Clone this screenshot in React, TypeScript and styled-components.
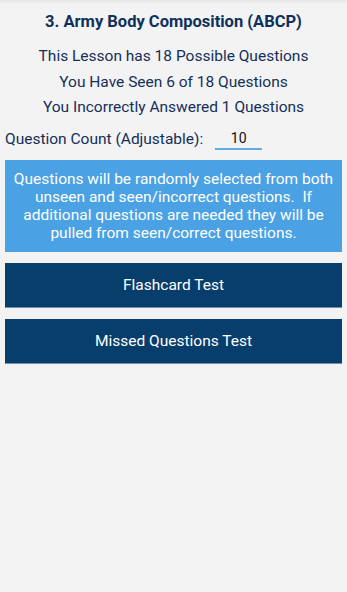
import React, { useState } from 'react';
import styled, { createGlobalStyle } from 'styled-components';

const GlobalStyle = createGlobalStyle`
  html, body {
    margin: 0;
    padding: 0;
    background: #f3f3f3;
  }
  body {
    font-family: Roboto, "Liberation Sans", sans-serif;
  }
`;

const Screen = styled.div`
  width: 347px;
  min-height: 592px;
  background: linear-gradient(#e6e6e6 0, #f3f3f3 4px);
  display: flex;
  flex-direction: column;
  padding: 0 5px;
  box-sizing: border-box;
`;

const Title = styled.h1`
  margin: 11px 0 0;
  font-size: 16.5px;
  font-weight: 700;
  line-height: 22px;
  color: #10305c;
  text-align: center;
`;

const Stats = styled.div`
  margin-top: 11px;
  display: flex;
  flex-direction: column;
`;

const StatLine = styled.p`
  margin: 0;
  font-size: 15.5px;
  line-height: 25.5px;
  color: #132f5a;
  text-align: center;
`;

const CountRow = styled.div`
  margin-top: 6px;
  display: flex;
  align-items: center;
  height: 24px;
`;

const CountLabel = styled.span`
  font-size: 15.5px;
  color: #132f5a;
`;

const CountInput = styled.input`
  margin-left: 12px;
  width: 47px;
  height: 20px;
  padding: 0;
  border: none;
  border-bottom: 2px solid #5aaee0;
  background: transparent;
  text-align: center;
  font-family: Roboto, "Liberation Sans", sans-serif;
  font-size: 14px;
  color: #111;
  outline: none;
`;

const Notice = styled.div`
  margin-top: 9px;
  height: 92px;
  background: #4aa1e3;
  color: #fff;
  font-size: 15.5px;
  line-height: 18px;
  text-align: center;
  display: flex;
  align-items: center;
  justify-content: center;
  padding: 0 3px;
  box-sizing: border-box;
`;

const ActionButton = styled.button`
  margin-top: 11px;
  height: 45px;
  width: 100%;
  border: none;
  border-bottom: 1px solid #6f8fae;
  background: #083e6c;
  color: #fff;
  font-family: Roboto, "Liberation Sans", sans-serif;
  font-size: 15.5px;
  cursor: pointer;
`;

export default function App() {
  const [count, setCount] = useState('10');
  return (
    <>
      <GlobalStyle />
      <Screen>
        <Title>3. Army Body Composition (ABCP)</Title>
        <Stats>
          <StatLine>This Lesson has 18 Possible Questions</StatLine>
          <StatLine>You Have Seen 6 of 18 Questions</StatLine>
          <StatLine>You Incorrectly Answered 1 Questions</StatLine>
        </Stats>
        <CountRow>
          <CountLabel>Question Count (Adjustable):</CountLabel>
          <CountInput value={count} onChange={e => setCount(e.target.value)} />
        </CountRow>
        <Notice>
          Questions will be randomly selected from both unseen and seen/incorrect questions.&nbsp; If
          additional questions are needed they will be pulled from seen/correct questions.
        </Notice>
        <ActionButton>Flashcard Test</ActionButton>
        <ActionButton>Missed Questions Test</ActionButton>
      </Screen>
    </>
  );
}
